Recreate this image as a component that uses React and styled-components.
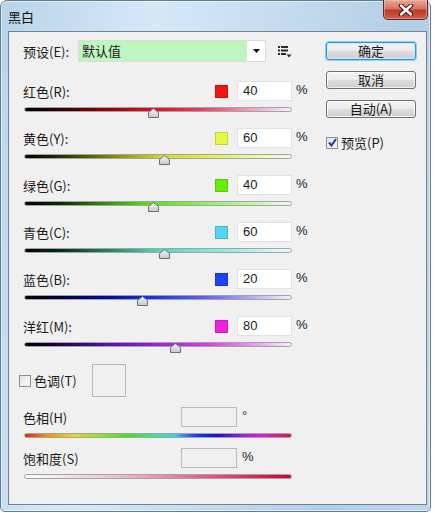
import styled, { createGlobalStyle } from "styled-components";

const GlobalStyle = createGlobalStyle`
    body {
        margin: 0;
        background: #ffffff;
        font-family: "Noto Sans CJK SC", "Noto Sans", sans-serif;
        color: #1b1b1b;
    }
`;

const channels = [
    { name: "红色(R):", swatch: "#f01414", value: 40,
      grad: "#000 0%, #3a0000 14%, #a00008 32%, #e0101c 48%, #f03a58 66%, #f4a2c2 86%, #f8f2f8 100%" },
    { name: "黄色(Y):", swatch: "#e8f840", value: 60,
      grad: "#000 0%, #2c2c00 14%, #8a9000 34%, #d4e01c 52%, #e6f040 70%, #f0f8a8 88%, #f8f8ec 100%" },
    { name: "绿色(G):", swatch: "#62f000", value: 40,
      grad: "#000 0%, #0e2c00 14%, #389a00 32%, #5ede00 46%, #84f040 64%, #c4f8b4 88%, #f2f8f2 100%" },
    { name: "青色(C):", swatch: "#54d4ee", value: 60,
      grad: "#000 0%, #0e2c24 14%, #2e8c6e 34%, #50d6b6 50%, #78e8d8 68%, #c2f2f2 88%, #f2f8f8 100%" },
    { name: "蓝色(B):", swatch: "#1c44f0", value: 20,
      grad: "#000 0%, #00003c 14%, #0010a8 32%, #1e30ee 48%, #6060f0 68%, #c2baf2 88%, #f2f2f8 100%" },
    { name: "洋红(M):", swatch: "#f020e0", value: 80,
      grad: "#000 0%, #1e003c 12%, #5a10b8 32%, #a820e0 52%, #e040e0 70%, #f0a4f0 88%, #f8f2f8 100%" },
];

function Thumb() {
    return (
        <svg width="11" height="10" viewBox="0 0 11 10">
            <defs>
                <linearGradient id="tg" x1="0" y1="0" x2="0" y2="1">
                    <stop offset="0" stopColor="#f6f6f6" />
                    <stop offset="1" stopColor="#c4c8cc" />
                </linearGradient>
            </defs>
            <path d="M5.5 0.5 L10.5 4.5 L10.5 9.5 L0.5 9.5 L0.5 4.5 Z" fill="url(#tg)" stroke="#6c7078" />
        </svg>
    );
}

function CloseGlyph() {
    return (
        <svg width="16" height="12" viewBox="0 0 16 12">
            <path d="M3 1.5 L13 10.5 M13 1.5 L3 10.5" stroke="#3c1410" strokeWidth="4.4" strokeLinecap="round" />
            <path d="M3 1.5 L13 10.5 M13 1.5 L3 10.5" stroke="#ffffff" strokeWidth="2.4" strokeLinecap="round" />
        </svg>
    );
}

function ListGlyph() {
    return (
        <svg width="14" height="12" viewBox="0 0 14 12">
            <g fill="#2a2a2a">
                <rect x="0" y="0" width="2" height="2" />
                <rect x="3" y="0" width="7" height="2" />
                <rect x="0" y="3.5" width="2" height="2" />
                <rect x="3" y="3.5" width="7" height="2" />
                <rect x="0" y="7" width="2" height="2" />
                <rect x="3" y="7" width="5" height="2" />
                <path d="M8.5 8.5 L13.5 8.5 L11 11.5 Z" />
            </g>
        </svg>
    );
}

function ArrowGlyph() {
    return (
        <svg width="7" height="4" viewBox="0 0 7 4">
            <path d="M0 0 L7 0 L3.5 4 Z" fill="#111" />
        </svg>
    );
}

function CheckGlyph() {
    return (
        <svg width="9" height="9" viewBox="0 0 9 9">
            <path d="M1 4.5 L3.5 7.5 L8 1" fill="none" stroke="#1b3a9e" strokeWidth="2" />
        </svg>
    );
}

function Slider({ grad, value }) {
    const pct = value === undefined ? null : (value + 200) / 500;
    return (
        <Track $grad={grad}>
            {pct !== null && (
                <ThumbWrap style={{ left: `${pct * 268 - 5.5}px` }}>
                    <Thumb />
                </ThumbWrap>
            )}
        </Track>
    );
}

export default function App() {
    return (
        <>
            <GlobalStyle />
            <Window>
                <TitleBar>
                    <Title>黑白</Title>
                    <CloseButton><CloseGlyph /></CloseButton>
                </TitleBar>
                <Panel>
                    <Main>
                        <PresetRow>
                            <PresetLabel>预设(E):</PresetLabel>
                            <Select>
                                <SelectValue>默认值</SelectValue>
                                <SelectArrow><ArrowGlyph /></SelectArrow>
                            </Select>
                            <IconSlot><ListGlyph /></IconSlot>
                        </PresetRow>
                        <ChannelList>
                            {channels.map((c) => (
                                <ChannelBlock key={c.name}>
                                    <FieldRow>
                                        <Label>{c.name}</Label>
                                        <Swatch $color={c.swatch} />
                                        <NumberBox>{c.value}</NumberBox>
                                        <Unit>%</Unit>
                                    </FieldRow>
                                    <Slider grad={`linear-gradient(to right, ${c.grad})`} value={c.value} />
                                </ChannelBlock>
                            ))}
                        </ChannelList>
                        <TintRow>
                            <CheckBox />
                            <TintLabel>色调(T)</TintLabel>
                            <TintBox />
                        </TintRow>
                        <ToneRow>
                            <ToneLabel>色相(H)</ToneLabel>
                            <DisabledBox />
                            <ToneUnit>°</ToneUnit>
                        </ToneRow>
                        <Slider grad="linear-gradient(to right, #e02a10 0%, #f08a10 8%, #e8d820 18%, #9ae020 28%, #48e020 38%, #40e090 50%, #40d0e8 56%, #2040f0 64%, #1010d0 72%, #a020e0 82%, #e020c0 90%, #e01050 100%)" />
                        <ToneRow>
                            <ToneLabel>饱和度(S)</ToneLabel>
                            <DisabledBox />
                            <ToneUnit>%</ToneUnit>
                        </ToneRow>
                        <Slider grad="linear-gradient(to right, #ffffff 0%, #f6d0e0 25%, #f0a0c0 45%, #e86090 65%, #e02850 85%, #d80020 100%)" />
                    </Main>
                    <Side>
                        <Button $primary>确定</Button>
                        <Button>取消</Button>
                        <Button $gap={17}>自动(A)</Button>
                        <PreviewRow>
                            <CheckBox $checked><CheckGlyph /></CheckBox>
                            <span>预览(P)</span>
                        </PreviewRow>
                    </Side>
                </Panel>
            </Window>
        </>
    );
}

const Window = styled.div`
    box-sizing: border-box;
    width: 431px;
    height: 512px;
    display: flex;
    flex-direction: column;
    border: 1px solid #5f7c98;
    border-radius: 7px 7px 5px 5px;
    background: linear-gradient(100deg, #b8d4ea 0%, #d6e8f6 30%, #c4dcee 55%, #b2cee6 80%, #bcd6ec 100%);
    box-shadow: inset 0 0 0 1px rgba(255, 255, 255, 0.55);
`;

const TitleBar = styled.div`
    height: 30px;
    display: flex;
    align-items: flex-start;
    padding-left: 7px;
`;

const Title = styled.div`
    margin-top: 8px;
    font-size: 13px;
    line-height: 16px;
    color: #111;
`;

const CloseButton = styled.div`
    margin-left: auto;
    margin-right: 2px;
    margin-top: -1px;
    width: 45px;
    height: 20px;
    box-sizing: border-box;
    display: flex;
    align-items: center;
    justify-content: center;
    border: 1px solid #5a2a24;
    border-top: none;
    border-radius: 0 0 5px 5px;
    background: linear-gradient(to bottom, #e8a89a 0%, #d67460 45%, #c03a26 55%, #d2604a 100%);
    box-shadow: inset 0 0 0 1px rgba(255, 200, 190, 0.45);
`;

const Panel = styled.div`
    flex: 1;
    margin: 0 3px 6px 7px;
    border: 1px solid #6f8498;
    background: #f0f0f0;
    display: grid;
    grid-template-columns: 296px 1fr;
`;

const Main = styled.div`
    padding: 8px 0 0 14px;
    font-size: 13px;
`;

const PresetRow = styled.div`
    height: 22px;
    display: flex;
    align-items: center;
`;

const PresetLabel = styled.div`
    width: 55px;
`;

const Select = styled.div`
    box-sizing: border-box;
    width: 188px;
    height: 22px;
    display: flex;
    border: 1px solid #d8dcdc;
    background: #ffffff;
`;

const SelectValue = styled.div`
    flex: 1;
    background: #bff5bf;
    padding-left: 3px;
    line-height: 20px;
`;

const SelectArrow = styled.div`
    width: 18px;
    display: flex;
    align-items: center;
    justify-content: center;
`;

const IconSlot = styled.div`
    margin-left: 12px;
    display: flex;
    padding-top: 2px;
`;

const ChannelList = styled.div`
    margin-top: 19px;
`;

const ChannelBlock = styled.div`
    height: 47px;
`;

const FieldRow = styled.div`
    height: 20px;
    display: flex;
    align-items: center;
`;

const ToneRow = styled(FieldRow)`
    margin-top: 10px;
`;

const Label = styled.div`
    flex: 1;
`;

const ToneLabel = styled.div`
    width: 158px;
`;

const Swatch = styled.div`
    width: 13px;
    height: 13px;
    background: ${(p) => p.$color};
    box-sizing: border-box;
    border: 1px solid rgba(0, 0, 0, 0.15);
    margin-right: 9px;
`;

const NumberBox = styled.div`
    box-sizing: border-box;
    width: 55px;
    height: 20px;
    border: 1px solid #dfe2e6;
    background: #ffffff;
    padding-left: 5px;
    line-height: 18px;
    font-family: "Liberation Sans", "Noto Sans", sans-serif;
    font-size: 13px;
`;

const DisabledBox = styled(NumberBox)`
    width: 56px;
    background: #f0f0f0;
    border-color: #b8bcc0;
`;

const Unit = styled.div`
    width: 9px;
    margin-left: 4px;
    margin-top: -4px;
    font-family: "Liberation Sans", "Noto Sans", sans-serif;
`;

const ToneUnit = styled(Unit)`
    margin-left: 5px;
    width: auto;
`;

const Track = styled.div`
    position: relative;
    box-sizing: border-box;
    margin: 6px 0 0 1px;
    width: 268px;
    height: 5px;
    border: 1px solid #9ea4aa;
    border-radius: 3px;
    background: ${(p) => p.$grad};
`;

const ThumbWrap = styled.div`
    position: absolute;
    top: 0;
    display: flex;
`;

const TintRow = styled.div`
    margin-top: 1px;
    height: 33px;
    display: flex;
    align-items: center;
`;

const CheckBox = styled.div`
    box-sizing: border-box;
    width: 12px;
    height: 12px;
    border: 1px solid #8e8f8f;
    background: linear-gradient(to bottom right, #e4e4e4, #fafafa);
    display: flex;
    align-items: center;
    justify-content: center;
    margin-left: ${(p) => (p.$checked ? "0" : "-4px")};
`;

const TintLabel = styled.div`
    margin-left: 3px;
    width: 58px;
`;

const TintBox = styled.div`
    width: 34px;
    height: 33px;
    box-sizing: border-box;
    border: 1px solid #b4b8bc;
`;

const Side = styled.div`
    padding: 10px 0 0 21px;
    display: flex;
    flex-direction: column;
    align-items: flex-start;
    font-size: 13px;
`;

const Button = styled.div`
    box-sizing: border-box;
    width: 90px;
    height: 18px;
    margin-bottom: ${(p) => p.$gap ?? 11}px;
    border: 1px solid ${(p) => (p.$primary ? "#3c8fd0" : "#707070")};
    border-radius: 3px;
    background: linear-gradient(to bottom, #f4f4f4 0%, #ebebeb 48%, #dddddd 52%, #cfcfcf 100%);
    box-shadow: ${(p) => (p.$primary ? "0 0 0 1px #8ad0f4, inset 0 0 0 1px #c8ecfc" : "inset 0 0 0 1px rgba(255,255,255,0.7)")};
    text-align: center;
    line-height: 16px;
`;

const PreviewRow = styled.div`
    display: flex;
    align-items: center;
    gap: 3px;
    margin-top: -2px;
`;
